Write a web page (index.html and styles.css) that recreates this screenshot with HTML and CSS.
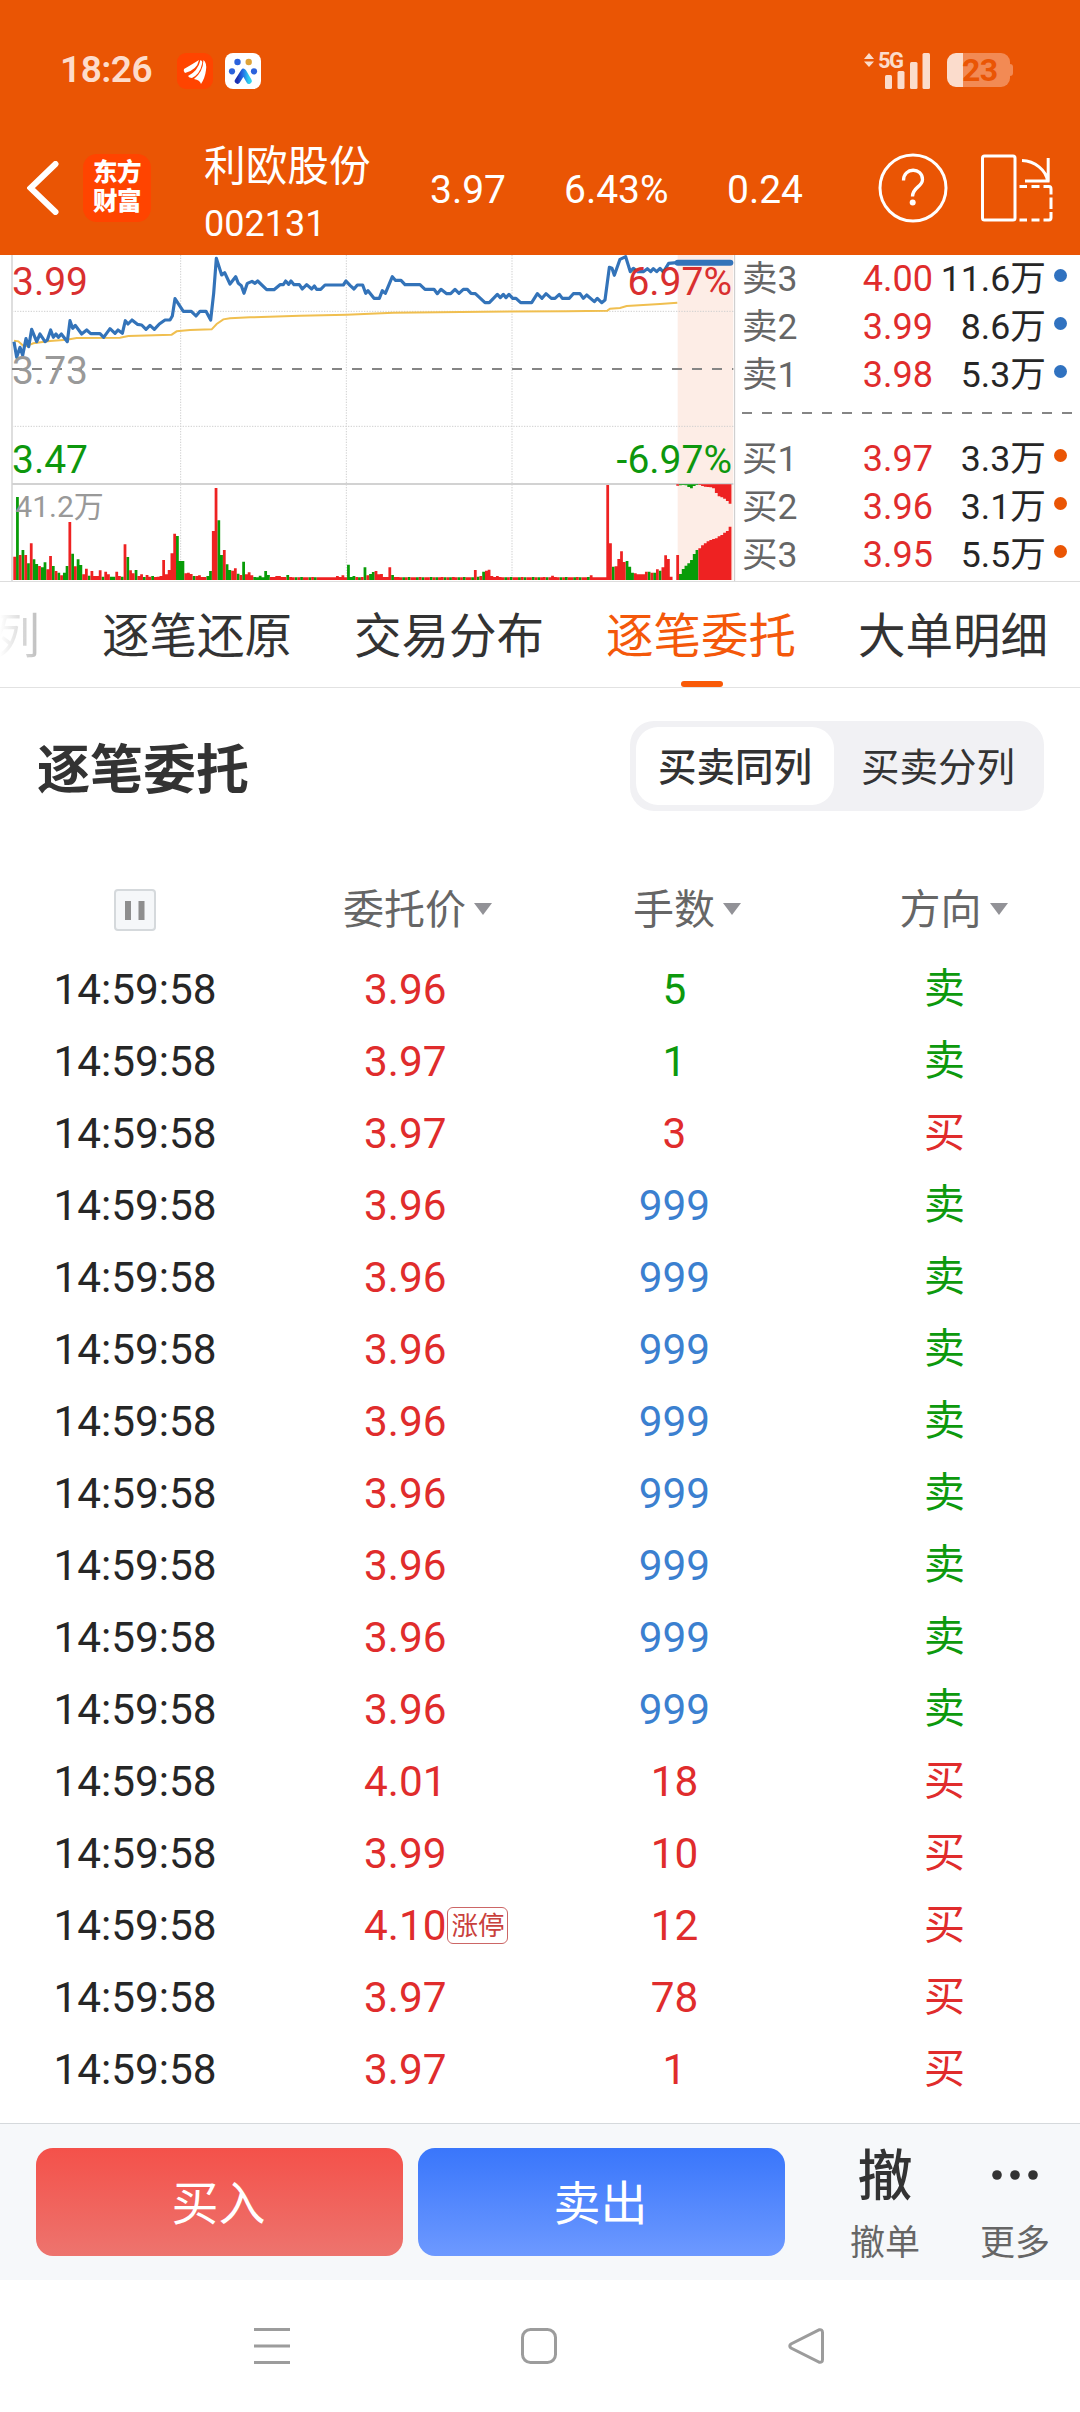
FILE: index.html
```html
<!DOCTYPE html>
<html lang="zh-CN">
<head>
<meta charset="utf-8">
<title>利欧股份 002131</title>
<link rel="stylesheet" href="styles.css">
</head>
<body>
<header class="top">
  <div class="status">
    <span class="clock">18:26</span>
    <svg class="app-icon" viewBox="0 0 36 36"><rect width="36" height="36" rx="9" fill="#ff4400"/><path fill="#fff" d="M7 16Q14 12 22 7Q20 17 8 20Q6 18 7 16ZM11 23Q21 18 23.500 7Q26 8 25 11Q23 21 15 25Q12 25 11 23ZM17 26Q26 19 26.500 7Q30 10 29 17Q28 25 24 31Q23 27 17 26Z"/></svg>
    <svg class="app-icon second" viewBox="0 0 36 36"><defs><linearGradient id="leg" x1="0" x2="1"><stop offset="0" stop-color="#1b2fb0"/><stop offset=".5" stop-color="#2374e8"/><stop offset="1" stop-color="#2fd0ee"/></linearGradient></defs><rect width="36" height="36" rx="8" fill="#fff"/><g fill="#2b62dc"><circle cx="12.500" cy="9" r="3.200"/><circle cx="7" cy="18.300" r="3.100"/><circle cx="29" cy="18.300" r="3.100"/></g><circle cx="23.700" cy="9" r="3.200" fill="#dfa338"/><path d="M12.500 28L18.500 18.500L24 28" fill="none" stroke="url(#leg)" stroke-width="5.500" stroke-linecap="round" stroke-linejoin="round"/></svg>
    <div class="status-right">
      <svg class="updown" viewBox="0 0 10 14"><path fill="#fbdccc" d="M5 0L10 6H0ZM5 14L10 8.500H0Z"/></svg>
      <div class="signal"><span class="net">5G</span>
        <svg viewBox="0 0 46 37"><g fill="#fbdccc"><rect x="0" y="23" width="7" height="14" rx="1.500"/><rect x="12.500" y="19" width="7" height="18" rx="1.500"/><rect x="25" y="10" width="7.500" height="27" rx="1.500"/><rect x="37.500" y="1" width="7.500" height="36" rx="1.500"/></g></svg>
      </div>
      <div class="battery"><span>23</span></div>
    </div>
  </div>
  <div class="bar">
    <svg class="back" viewBox="0 0 32 54"><path d="M28.500 3L3.500 27L28.500 51" fill="none" stroke="#fff" stroke-width="6" stroke-linecap="round"/></svg>
    <div class="logo">东方<br>财富</div>
    <div class="stock"><div class="name">利欧股份</div><div class="code">002131</div></div>
    <span class="q price">3.97</span><span class="q pct">6.43%</span><span class="q diff">0.24</span>
    <svg class="help" viewBox="0 0 70 70"><circle cx="35" cy="35" r="33" fill="none" stroke="#fff" stroke-width="3"/><path d="M25.500 27.500C25.500 14 44.500 14 44.500 26.500C44.500 34 34.500 34 34.500 43.500" fill="none" stroke="#fff" stroke-width="3.300"/><circle cx="34.700" cy="49.500" r="3" fill="#fff"/></svg>
    <svg class="rotate" viewBox="0 0 74 68" fill="none" stroke="#fff" stroke-width="3"><rect x="2.500" y="2" width="32.500" height="64" rx="2"/><path d="M42 6.500C55 7 66 16 67.500 27M68.200 4V27.500M45 27H69.500"/><path d="M39.500 32.500H47M51.500 32.500H59.500M63.500 32.500H69Q71 32.500 71 35V40.500M71 43.500V55M71 58V63.500Q71 66 69 66H63.500M59.500 66H51.500M47 66H39.500"/></svg>
  </div>
</header>

<section class="market">
  <svg class="chart" viewBox="0 15 2208 978">
    <rect x="2033" y="15" width="167" height="975" fill="#fdede6"/>
    <g stroke="#cfcfcf" stroke-width="3" stroke-dasharray="4 4"><path d="M36 184H2200M36 529H2200M542 15V990M1039 15V990M1536 15V990"/></g>
    <path d="M36 15V993" stroke="#dedede" stroke-width="6"/>
    <path d="M2204 15V993" stroke="#c8c8c8" stroke-width="3"/>
    <path d="M36 702H2200" stroke="#d2d2d2" stroke-width="6"/>
    <path d="M36 357H2200" stroke="#858585" stroke-width="6" stroke-dasharray="30 30"/>
    <path id="down" stroke="#089c08" stroke-width="8.300"/>
    <path id="up" stroke="#ee2222" stroke-width="8.300"/>
    <polyline fill="none" stroke="#f0bf50" stroke-width="6" points="42,272 55,274 68,286 80,288 100,280 150,273 200,269 230,264 360,263 385,258 515,254 530,244 570,240 635,238 650,222 670,208 690,205 750,202 900,197 1040,194 1180,188 1450,185 1700,184 1822,182 1830,176 1860,174 1880,168 1980,162 2032,158"/>
    <polyline fill="none" stroke="#3373b9" stroke-width="9.500" stroke-linejoin="round" points="42,275 50,322 60,292 68,316 78,266 86,290 95,238 110,275 120,252 135,275 142,270 152,240 160,262 168,252 175,262 184,252 202,275 210,212 218,235 226,226 245,252 260,240 272,251 300,251 311,262 330,236 345,250 354,240 367,250 376,212 384,222 396,210 412,223 425,225 438,238 450,226 463,238 478,222 495,210 510,210 517,198 525,146 550,184 574,184 588,198 600,184 618,184 632,210 641,130 649,25 665,75 674,68 690,102 707,80 715,100 724,107 732,130 742,100 756,94 765,100 773,93 800,119 822,119 840,104 850,104 857,93 866,103 873,93 882,104 898,104 907,117 920,104 935,117 943,108 950,118 962,118 975,105 1030,105 1038,93 1050,106 1062,117 1072,105 1088,105 1097,130 1104,122 1122,145 1138,145 1147,122 1156,130 1177,80 1186,91 1203,91 1215,104 1260,104 1275,118 1302,118 1312,131 1323,118 1340,131 1352,131 1365,118 1377,130 1390,118 1402,118 1413,130 1426,131 1455,158 1468,158 1492,133 1501,143 1510,133 1518,143 1527,133 1538,145 1548,145 1562,158 1595,158 1612,131 1626,145 1638,131 1654,145 1665,145 1678,133 1687,145 1708,145 1720,131 1740,131 1750,145 1760,135 1783,155 1792,145 1805,158 1815,150 1828,52 1836,55 1843,76 1860,28 1877,20 1891,65 1900,55 1913,65 1930,65 1942,56 1952,65 1960,56 1970,65 1980,55 1990,66 2006,40 2030,38"/>
    <path d="M2033 38H2191" stroke="#3373b9" stroke-width="18" stroke-linecap="round"/>
    <g class="axis">
      <text x="36" y="135" fill="#d92f2f">3.99</text>
      <text x="36" y="402" fill="#999">3.73</text>
      <text x="36" y="669" fill="#0d970d">3.47</text>
      <text x="2196" y="135" fill="#d92f2f" text-anchor="end">6.97%</text>
      <text x="2196" y="669" fill="#0d970d" text-anchor="end">-6.97%</text>
      <text class="vol" x="46" y="800" fill="#999">41.2万</text>
    </g>
  </svg>
  <div class="book">
    <div class="lv ask"><span>卖3</span><b>4.00</b><i>11.6万</i><u></u></div>
    <div class="lv ask"><span>卖2</span><b>3.99</b><i>8.6万</i><u></u></div>
    <div class="lv ask"><span>卖1</span><b>3.98</b><i>5.3万</i><u></u></div>
    <div class="mid"></div>
    <div class="lv bid"><span>买1</span><b>3.97</b><i>3.3万</i><u></u></div>
    <div class="lv bid"><span>买2</span><b>3.96</b><i>3.1万</i><u></u></div>
    <div class="lv bid"><span>买3</span><b>3.95</b><i>5.5万</i><u></u></div>
  </div>
</section>

<nav class="tabs"><span class="prev">列</span><span>逐笔还原</span><span>交易分布</span><span class="active">逐笔委托</span><span>大单明细</span></nav>

<section class="heading"><h1>逐笔委托</h1><div class="segment"><span class="on">买卖同列</span><span>买卖分列</span></div></section>

<section class="table">
  <div class="row head"><div class="time"><svg class="pause" viewBox="0 0 42 42"><rect x="1" y="1" width="40" height="40" rx="3" fill="#f5f7f9" stroke="#d5d9dc" stroke-width="2"/><path d="M14 12V31M27.500 12V31" stroke="#8e8e8e" stroke-width="6"/></svg></div><div class="cost">委托价<em></em></div><div class="lots">手数<em></em></div><div class="side">方向<em></em></div></div>
  <div class="row sell"><div class="time">14:59:58</div><div class="cost">3.96</div><div class="lots">5</div><div class="side">卖</div></div>
  <div class="row sell"><div class="time">14:59:58</div><div class="cost">3.97</div><div class="lots">1</div><div class="side">卖</div></div>
  <div class="row buy"><div class="time">14:59:58</div><div class="cost">3.97</div><div class="lots">3</div><div class="side">买</div></div>
  <div class="row sell big"><div class="time">14:59:58</div><div class="cost">3.96</div><div class="lots">999</div><div class="side">卖</div></div>
  <div class="row sell big"><div class="time">14:59:58</div><div class="cost">3.96</div><div class="lots">999</div><div class="side">卖</div></div>
  <div class="row sell big"><div class="time">14:59:58</div><div class="cost">3.96</div><div class="lots">999</div><div class="side">卖</div></div>
  <div class="row sell big"><div class="time">14:59:58</div><div class="cost">3.96</div><div class="lots">999</div><div class="side">卖</div></div>
  <div class="row sell big"><div class="time">14:59:58</div><div class="cost">3.96</div><div class="lots">999</div><div class="side">卖</div></div>
  <div class="row sell big"><div class="time">14:59:58</div><div class="cost">3.96</div><div class="lots">999</div><div class="side">卖</div></div>
  <div class="row sell big"><div class="time">14:59:58</div><div class="cost">3.96</div><div class="lots">999</div><div class="side">卖</div></div>
  <div class="row sell big"><div class="time">14:59:58</div><div class="cost">3.96</div><div class="lots">999</div><div class="side">卖</div></div>
  <div class="row buy"><div class="time">14:59:58</div><div class="cost">4.01</div><div class="lots">18</div><div class="side">买</div></div>
  <div class="row buy"><div class="time">14:59:58</div><div class="cost">3.99</div><div class="lots">10</div><div class="side">买</div></div>
  <div class="row buy"><div class="time">14:59:58</div><div class="cost">4.10<span class="tag">涨停</span></div><div class="lots">12</div><div class="side">买</div></div>
  <div class="row buy"><div class="time">14:59:58</div><div class="cost">3.97</div><div class="lots">78</div><div class="side">买</div></div>
  <div class="row buy"><div class="time">14:59:58</div><div class="cost">3.97</div><div class="lots">1</div><div class="side">买</div></div>
</section>

<footer class="trade">
  <div class="btn red">买入</div><div class="btn blue">卖出</div>
  <div class="act cancel"><span class="glyph">撤</span><span>撤单</span></div>
  <div class="act more"><svg class="glyph" viewBox="0 0 48 56"><g fill="#333"><circle cx="6" cy="27" r="4.800"/><circle cx="24" cy="27" r="4.800"/><circle cx="42" cy="27" r="4.800"/></g></svg><span>更多</span></div>
</footer>
<div class="sysnav">
  <svg viewBox="0 0 36 36"><path d="M0 1.500H36M0 18H36M0 34.500H36"/></svg>
  <svg viewBox="0 0 36 36"><rect x="1.500" y="1.500" width="33" height="33" rx="8"/></svg>
  <svg viewBox="0 0 36 36"><path d="M31 1.800L3 16Q.5 18 3 20L31 34.200Q34.500 35 34.500 31.500V4.500Q34.500 1 31 1.800Z"/></svg>
</div>
<script src="chart.js"></script>
</body>
</html>
```
FILE: styles.css
```css
* { box-sizing: border-box; }
body { margin: 0; width: 1080px; height: 2412px; background: #fff; color: #262626; font-family: Roboto, "Noto Sans CJK SC", sans-serif; overflow: hidden; }
svg { display: block; flex: none; }

.top { height: 255px; background: #ea5504; color: #fff; }
.status { display: flex; align-items: center; height: 120px; padding: 22px 70px 0 60px; }
.clock { width: 117px; font-size: 37px; font-weight: 600; line-height: 36px; color: #fddccb; letter-spacing: -.5px; margin-top: -2px; }
.app-icon { width: 36px; height: 36px; }
.app-icon.second { margin-left: 12px; }
.status-right { display: flex; align-items: center; height: 36px; margin: -2px 0 0 auto; }
.updown { width: 10px; height: 14px; margin: 0 11px 21px 0; }
.signal { position: relative; width: 46px; height: 37px; margin-right: 16px; }
.signal svg { width: 46px; height: 37px; }
.net { position: absolute; left: -7px; top: -2px; font-size: 22px; line-height: 22px; font-weight: 700; letter-spacing: -1.5px; color: #fbdccc; }
.battery { position: relative; width: 63px; height: 34px; border-radius: 9px; background: linear-gradient(90deg, #fbdccc 16px, #f28a54 16px); }
.battery::after { content: ""; position: absolute; right: -3px; top: 11px; width: 3px; height: 12px; border-radius: 0 3px 3px 0; background: #f28a54; }
.battery span { display: block; padding-left: 15px; font-size: 32px; line-height: 35px; font-weight: 700; letter-spacing: -.5px; color: #ea5504; }

.bar { display: flex; align-items: center; height: 135px; padding: 0 25px 0 27px; }
.back { width: 32px; height: 54px; }
.logo { width: 68px; height: 68px; margin-left: 24px; border-radius: 14px; background: #ff4400; font-size: 24.500px; line-height: 29px; font-weight: 900; text-align: center; padding-top: 4px; letter-spacing: -.5px; }
.stock { width: 225px; margin: 15px 0 0 53px; }
.name { font-size: 41.700px; line-height: 58px; }
.code { font-size: 36px; line-height: 56px; }
.q { font-size: 39px; line-height: 60px; margin-top: 5px; }
.price { width: 134px; margin-left: 1px; }
.pct { width: 163px; }
.diff { width: 152px; }
.help { width: 70px; height: 70px; margin-left: -1px; }
.rotate { width: 74px; height: 68px; margin-left: 32px; }

.market { display: flex; height: 327px; border-bottom: 1px solid #ddd; }
.chart { width: 736px; height: 326px; }
.axis text { font-size: 117px; }
.axis .vol { font-size: 90px; }
.book { flex: 1; padding-left: 6px; }
.lv { display: flex; align-items: center; height: 48px; font-size: 36px; line-height: 48px; }
.lv span { width: 90px; font-size: 35.500px; color: #666; }
.lv b { width: 101px; text-align: right; font-weight: 400; color: #e02c2c; }
.lv i { width: 113px; text-align: right; font-style: normal; font-size: 35.700px; }
.lv u { width: 13px; height: 13px; margin: 0 0 8px 8px; border-radius: 50%; background: #3072c0; }
.lv.bid u { background: #ea5504; }
.mid { height: 36px; background: repeating-linear-gradient(90deg, #858585 0 10px, transparent 10px 20px) 0 13px / 100% 2px no-repeat; }

.tabs { display: flex; gap: 62px; height: 106px; border-bottom: 1px solid #e2e2e2; font-size: 47.500px; line-height: 111px; color: #333; white-space: nowrap; overflow: hidden; }
.tabs .prev { width: 40px; direction: rtl; background: linear-gradient(90deg, #fff 0%, #bbb 100%); background-clip: text; color: transparent; }
.tabs .active { position: relative; color: #f4580a; }
.tabs .active::after { content: ""; position: absolute; left: 75px; bottom: 0; width: 42px; height: 6px; border-radius: 3px; background: #f95a08; }

.heading { display: flex; align-items: center; justify-content: space-between; height: 157px; padding: 0 36px 0 37px; }
.heading h1 { margin: 9px 0 0; font-size: 53px; line-height: 80px; color: #333; }
.segment { display: flex; align-items: center; width: 414px; height: 90px; margin-bottom: 1px; padding: 6px; border-radius: 24px; background: #f1f1f4; color: #333; font-size: 38.500px; line-height: 81px; text-align: center; }
.segment span { flex: 1; height: 78px; padding-left: 4px; }
.segment .on { flex: none; width: 198px; padding: 0; border-radius: 22px; background: #fff; font-weight: 500; }

.table { padding-top: 22px; height: 1278px; }
.row { display: grid; grid-template-columns: 270px 270px 269px 271px; align-items: center; height: 72px; font-size: 42.300px; line-height: 75px; }
.head { height: 85px; font-size: 41px; line-height: 87px; color: #666; }
.time { text-align: center; }
.pause { width: 42px; height: 42px; margin: -2px auto 0; }
.cost { display: flex; align-items: center; padding-left: 94px; color: #e02c2c; }
.lots, .side { text-align: center; }
.side { font-size: 41px; }
.head .cost { padding-left: 73px; color: #666; }
.head em { display: inline-block; width: 0; height: 0; margin-left: 8px; vertical-align: 9px; border: 9px solid transparent; border-top: 12px solid #929297; border-bottom: 0; }
.head .cost em { margin-bottom: 3px; }
.head .lots { padding-left: 25px; }
.head .side { padding-left: 18px; }
.sell .lots, .sell .side { color: #0d990d; }
.buy .lots, .buy .side { color: #e02c2c; }
.big .lots { color: #3b80d0; }
.tag { margin-left: 1px; padding: 0 3px; height: 37px; border: 1px solid #c66; border-radius: 6px; font-size: 26.500px; line-height: 35px; color: #c9413d; }

.trade { display: flex; height: 157px; padding: 24px 0 0 36px; border-top: 1px solid #d5d9dc; background: #f6f8fa; }
.btn { width: 367px; height: 108px; padding-right: 2px; border-radius: 17px; color: #fff; font-size: 47px; line-height: 111px; text-align: center; }
.red { background: linear-gradient(#f4514a, #ed746e); }
.blue { margin-left: 15px; background: linear-gradient(#3976fb, #6d99ff); }
.act { display: flex; flex-direction: column; align-items: center; width: 80px; font-size: 35px; line-height: 52px; color: #666; }
.cancel { margin-left: 60px; }
.more { margin-left: 50px; }
.act .glyph { height: 56px; margin-bottom: 14px; }
.cancel .glyph { font-size: 55px; line-height: 56px; font-weight: 500; color: #333; }
.more .glyph { width: 48px; }

.sysnav { display: flex; justify-content: space-between; height: 132px; padding: 48px 256px 0 254px; }
.sysnav svg { width: 36px; height: 36px; fill: none; stroke: #9c9c9c; stroke-width: 3; }
```
FILE: chart.js
```js
// One entry per minute: direction (r = up, g = down) and bar height.
const filler = (n) => Array.from({ length: n }, (_, i) => ((i * 7) % 5 < 3 ? "r" : "g") + (8 + (i % 4 === 0 ? 1 : 0)));
const reds = (n) => Array.from({ length: n }, () => "r8");
const volume = [
  ..."r70 g249 r75 g90 r75 g50 r110 g62 g48 r42 g38 g53 r32 r72 g42 r27 g22 r14 g22 g42 r174 g79 r41 g62 g45 r17 r34 g13 r27 r12 r12 r29 g10 r25 r17 g10 g10 r25 r12 g10".split(" "),
  ..."r107 g69 r29 r20 g30 r12 r17 g9 r15 r10 g12 r9 r10 r12 r60 r17 r30 r80 r139 g132 g57 g57 r20 r22 r18 g12 r12 r14 r9 r9 g12 g27 r147 r276 g179 g75 r90 g47 g30 r28".split(" "),
  ..."r35 g19 r15 g55 r17 r23 r14 g9 g8 g13 g8 g27 g15 r9 r9 r12 r12 r9 r9 g15".split(" "),
  ...filler(12), ...reds(5), ..."r12 r9 r14 r8 g46 g9 g12 r9 g8 r9 g38 r14 g18 g24 r27 r17 r18 r9 r9 r38 g15 r9".split(" "),
  ...filler(28), ..."r30 g10 r12 g25 r28 r31 r12 r9 r12".split(" "),
  ...filler(19), "r13", ...filler(13), "r14", ...reds(5),
  ..."r285 r110 g40 r41 r63 r86 r54 g57 g40 g22 r20 r17 r17 r17 r25 g25 r22 g22 r32 g28 r38 r74 r63 r10".split(" ")
];
const auction = "r75 g18 g33 g43 g50 g60 g78 g90 r95 r104 r110 r116 r120 r123 r125 r131 r135 r142 r147 r160".split(" ");
const unmatched = "r4 g3 g2 g3 g8 g12 g5 g2 r2 r5 r7 r8 r9 r12 r26 r36 r39 r43 r50 r58".split(" ");
const paths = { r: "", g: "" };
const add = (bar, x, base, sign) => {
  paths[bar[0]] += `M${x.toFixed(1)} ${base}v${sign * Number(bar.slice(1))}`;
};
volume.forEach((bar, i) => add(bar, 44 + i * 8.275, 990, -1));
auction.forEach((bar, i) => add(bar, 2033 + i * 8.27, 990, -1));
unmatched.forEach((bar, i) => add(bar, 2033 + i * 8.27, 703, 1));
document.getElementById("up").setAttribute("d", paths.r);
document.getElementById("down").setAttribute("d", paths.g);
```
